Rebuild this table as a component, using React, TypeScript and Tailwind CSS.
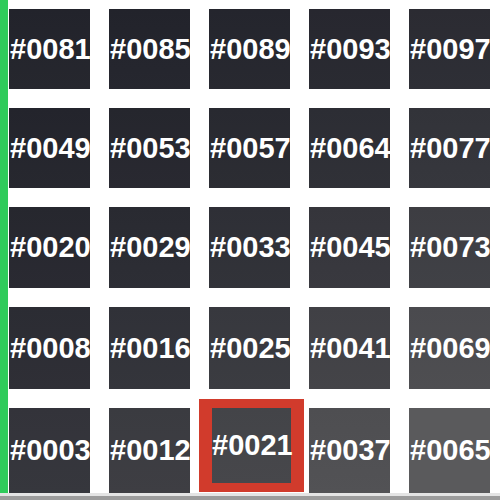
import React from 'react';

// tile ids, row by row (top → bottom)
const ROWS = [
  ['#0081', '#0085', '#0089', '#0093', '#0097'],
  ['#0049', '#0053', '#0057', '#0064', '#0077'],
  ['#0020', '#0029', '#0033', '#0045', '#0073'],
  ['#0008', '#0016', '#0025', '#0041', '#0069'],
  ['#0003', '#0012', '#0021', '#0037', '#0065'],
];

const ROW_H = ['h-[80px]', 'h-[80px]', 'h-[81px]', 'h-[82px]', 'h-[85px]'];

const SELECTED = '#0021';

// dark navy at the top-left, only turning grey near the bottom-right corner
function tileBg(r: number, c: number) {
  const t = Math.pow(Math.min(1, (r * 1.15 + c * 0.85) / 8), 2.2);
  const from = [0x22, 0x23, 0x2b];
  const to = [0x5a, 0x5a, 0x5c];
  const mix = (k: number) => from.map((v, i) => Math.round(v + (to[i] - v) * k));
  const a = mix(t);
  const b = mix(Math.min(1, t + 0.07));
  return `linear-gradient(to bottom, rgb(${a.join(',')}), rgb(${b.join(',')}))`;
}

function Tile({ id, r, c }: { id: string; r: number; c: number }) {
  const label = (
    <span className="whitespace-nowrap text-[29px] font-bold leading-none text-white">
      {id}
    </span>
  );

  if (id === SELECTED) {
    return (
      <div className="relative h-full w-full">
        <div className="absolute left-[-10px] top-[-9px] h-[93px] w-[105px] border-x-[13px] border-y-[9px] border-[#d13b2c]">
          <div className="flex h-full w-full items-center" style={{ background: tileBg(r, c) }}>
            {label}
          </div>
        </div>
      </div>
    );
  }

  return (
    <div className="flex h-full w-full items-center pl-px" style={{ background: tileBg(r, c) }}>
      {label}
    </div>
  );
}

export default function App() {
  return (
    <div className="flex h-[500px] w-[500px] flex-col overflow-hidden bg-white font-['Liberation_Sans',Arial,sans-serif]">
      <div className="flex h-[493px]">
        <div className="w-2 shrink-0 bg-[#2fcb5b]" />
        <div className="flex flex-col gap-y-[19px] pl-px pt-[9px]">
          {ROWS.map((row, r) => (
            <div key={r} className={`grid grid-cols-[repeat(5,81px)] gap-x-[19px] ${ROW_H[r]}`}>
              {row.map((id, c) => (
                <Tile key={id} id={id} r={r} c={c} />
              ))}
            </div>
          ))}
        </div>
      </div>
      <div className="h-[3px] bg-[#e4e4e4]" />
      <div className="flex-1 bg-[#9c9c9c]" />
    </div>
  );
}
